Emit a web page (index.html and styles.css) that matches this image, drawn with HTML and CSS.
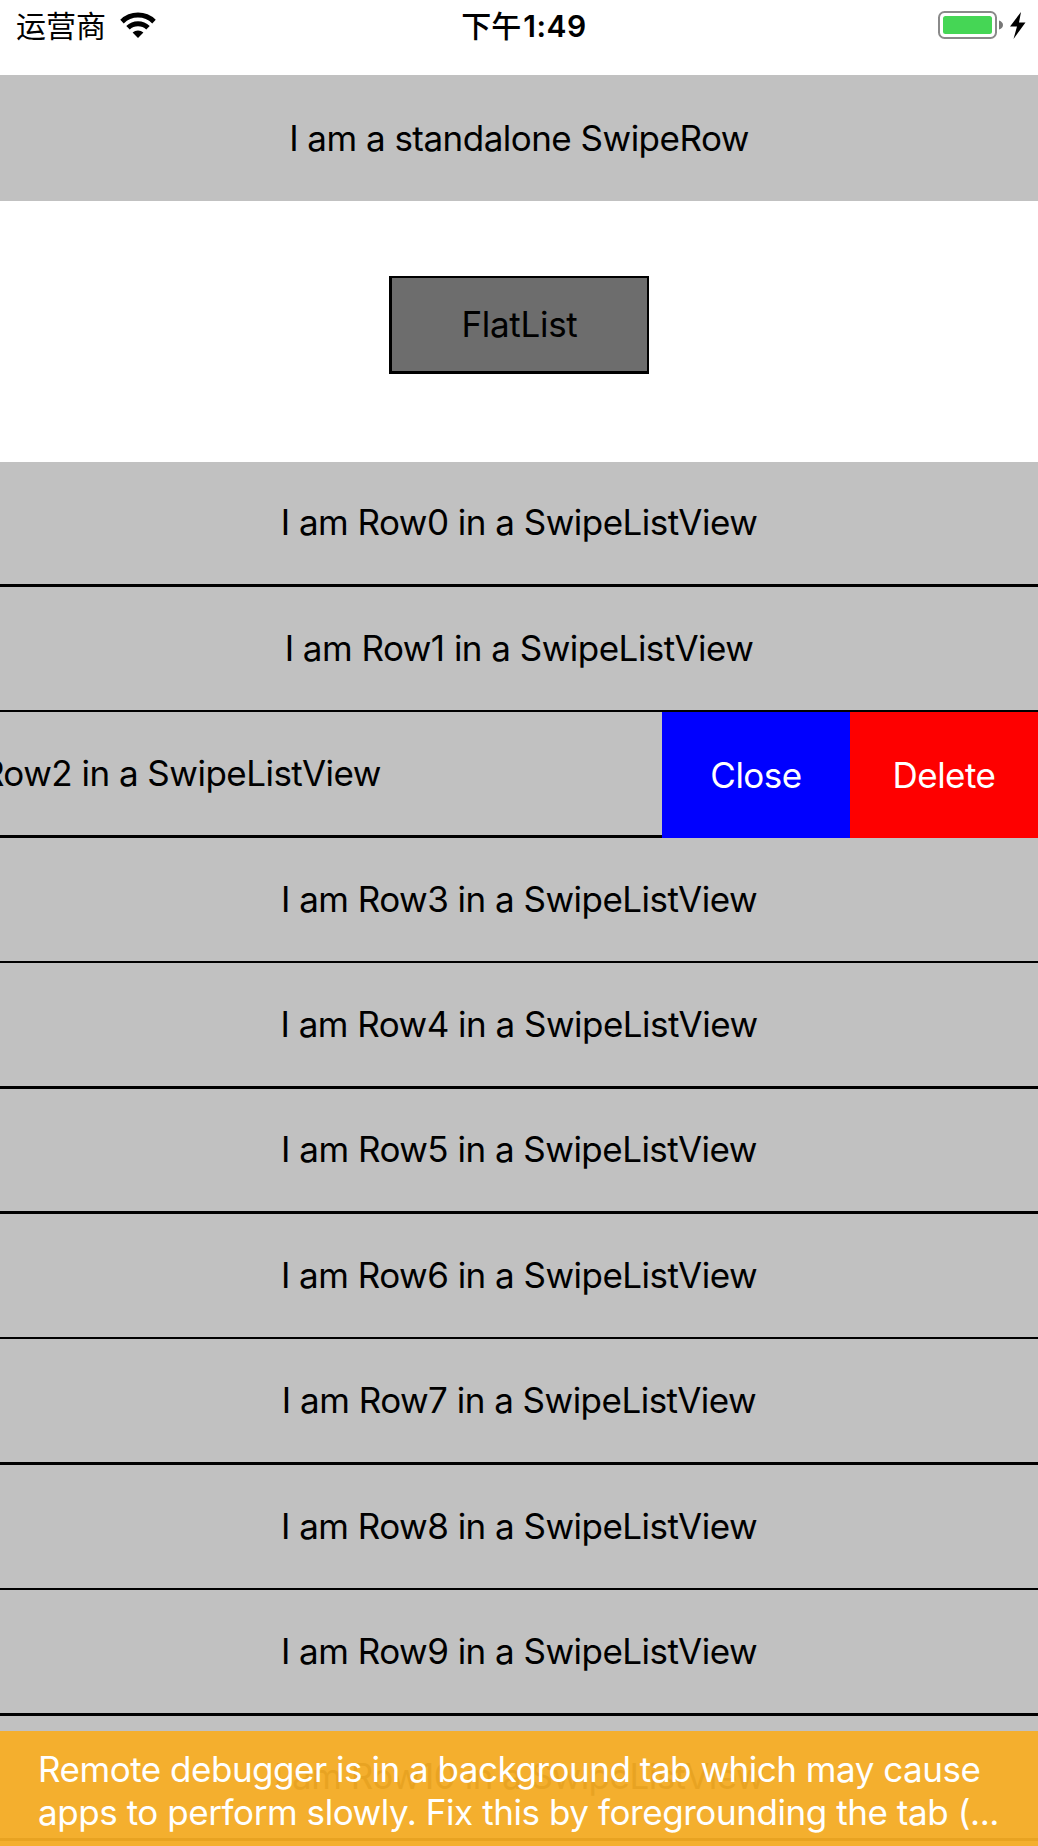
FILE: index.html
```html
<!DOCTYPE html>
<html lang="zh">
<head>
<meta charset="utf-8">
<title>SwipeListView</title>
<link rel="stylesheet" href="styles.css">
</head>
<body>
<div class="screen">
  <header class="status">
    <div class="status-left">
      <span class="carrier">运营商</span>
      <svg class="wifi" width="36" height="26" viewBox="0 0 36 26">
        <g fill="none" stroke="#000" stroke-width="5">
          <path d="M2 9.6A23 23 0 0 1 34 9.6"/>
          <path d="M8 15.8A14.5 14.5 0 0 1 28 15.8"/>
        </g>
        <path d="M12.6 20.6A8 8 0 0 1 23.4 20.6L18 26Z"/>
      </svg>
    </div>
    <div class="time"><span class="period">下午</span><span class="clock">1:49</span></div>
    <svg class="battery" width="90" height="30" viewBox="0 0 90 30">
      <rect x="1" y="2" width="57" height="26" rx="5.5" fill="#fff" stroke="#8a8a8a" stroke-width="2"/>
      <rect x="5" y="6" width="49" height="18" rx="2.5" fill="#45d655"/>
      <path d="M61 10.5Q65 12 65 15T61 19.500Z" fill="#777"/>
      <path d="M83 2L72 16.500H79L75.500 29L87.500 12.500H81Z"/>
    </svg>
  </header>
  <div class="standalone"><span class="label standalone-label">I am a standalone SwipeRow</span></div>
  <div class="controls"><button class="switcher"><span class="label switcher-label">FlatList</span></button></div>
  <main class="list">
    <div class="row thick"><span class="label">I am Row0 in a SwipeListView</span></div>
    <div class="row thin"><span class="label">I am Row1 in a SwipeListView</span></div>
    <div class="swipe">
      <div class="row thick front"><span class="label">I am Row2 in a SwipeListView</span></div>
      <div class="action close"><span class="label">Close</span></div>
      <div class="action delete"><span class="label">Delete</span></div>
    </div>
    <div class="row thin"><span class="label">I am Row3 in a SwipeListView</span></div>
    <div class="row thick tall"><span class="label">I am Row4 in a SwipeListView</span></div>
    <div class="row thick"><span class="label">I am Row5 in a SwipeListView</span></div>
    <div class="row thin"><span class="label">I am Row6 in a SwipeListView</span></div>
    <div class="row thick tall"><span class="label">I am Row7 in a SwipeListView</span></div>
    <div class="row thin"><span class="label">I am Row8 in a SwipeListView</span></div>
    <div class="row thick tall"><span class="label">I am Row9 in a SwipeListView</span></div>
    <div class="row thick"><span class="label">I am Row10 in a SwipeListView</span></div>
    <div class="row thin"></div>
  </main>
  <div class="warning">
    <div class="warning-line first">Remote debugger is in a background tab which may cause</div>
    <div class="warning-line second">apps to perform slowly. Fix this by foregrounding the tab (...</div>
  </div>
</div>
</body>
</html>
```
FILE: styles.css
```css
* { box-sizing: border-box; }
body { margin: 0; background: #fff; }
.screen {
  position: relative;
  width: 1038px;
  height: 1846px;
  overflow: hidden;
  font-family: Inter, "Noto Sans CJK SC", sans-serif;
  font-size: 35px;
  line-height: 42px;
  color: #000;
}
.label { white-space: nowrap; letter-spacing: -0.52px; }
.status {
  height: 75px;
  display: grid;
  grid-template-columns: 1fr auto 1fr;
  align-items: start;
  padding: 0 10px 0 16px;
}
.status-left { display: flex; gap: 14px; }
.carrier { font-family: "Noto Sans CJK SC", sans-serif; font-size: 30px; line-height: 48px; }
.wifi { margin-top: 12px; }
.time { display: flex; align-items: flex-start; padding-left: 4px; line-height: 52px; font-size: 30px; }
.period { font-family: "Noto Sans CJK SC", sans-serif; font-weight: 500; line-height: 48px; }
.clock { font-weight: 600; margin-left: 2px; letter-spacing: 0.5px; }
.battery { justify-self: end; margin-top: 10px; }
.standalone {
  height: 126px;
  display: flex;
  align-items: center;
  justify-content: center;
  background: #c1c1c1;
}
.controls { height: 261px; padding-top: 75px; display: flex; justify-content: center; align-items: flex-start; }
.switcher {
  width: 260px;
  height: 98px;
  padding: 0 0 2px;
  border: solid #000;
  border-width: 2px 2px 3px 3px;
  background: #6d6d6d;
  font: inherit;
  color: #000;
}
.switcher-label { letter-spacing: -0.3px; }
.row {
  height: 125px;
  padding-bottom: 2px;
  display: flex;
  align-items: center;
  justify-content: center;
  background: #c1c1c1;
  border-bottom: 2px solid #000;
}
.thick { border-bottom-width: 3px; }
.tall { height: 126px; }
.swipe { display: flex; height: 126px; }
.front { flex: none; width: 1038px; height: 126px; margin-left: -376px; }
.action { flex: none; width: 188px; display: flex; align-items: center; justify-content: center; color: #fff; }
.close { background: #00f; }
.delete { background: #fe0000; }
.warning {
  position: absolute;
  left: 0;
  right: 0;
  top: 1731px;
  height: 115px;
  padding: 17px 0 0 38px;
  background: rgba(247, 173, 36, 0.94);
  color: #fff;
  line-height: 43px;
  white-space: nowrap;
}
.first { letter-spacing: -0.48px; }
.second { letter-spacing: -0.43px; }
```
